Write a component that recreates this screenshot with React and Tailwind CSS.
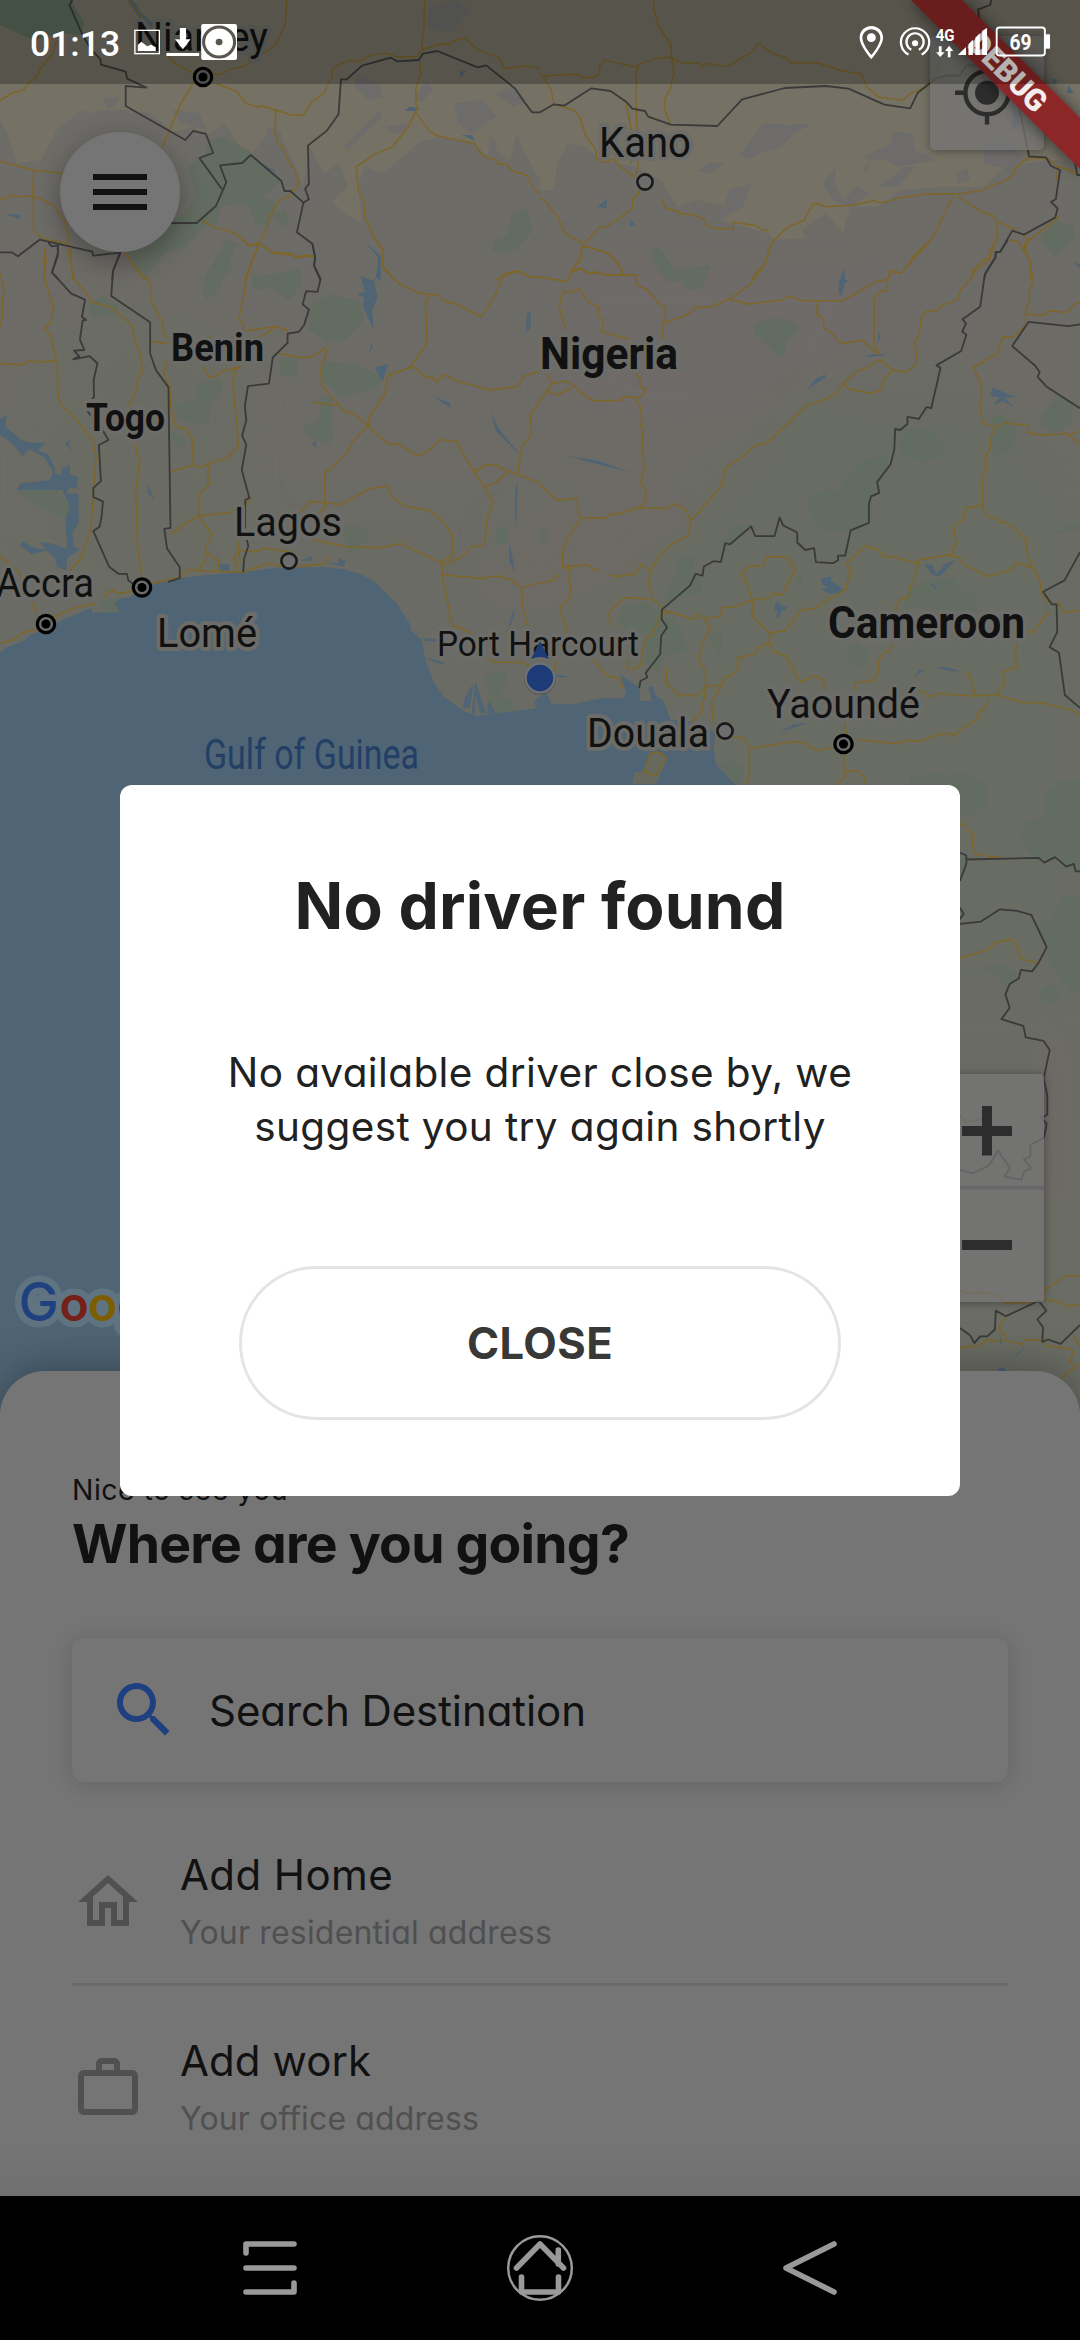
import React from "react";

const BORDERS_TOP_LEFT = [
  "M210 0 202 16 240 105 262 145 292 178 293 194 365 215 369 236 425 263 365 258 365 318 538 420 561 393 598 402 619 459 579 474 644 567",
  "M0 757H34L52 769 115 719 268 755 270 767 349 758 400 700 500 669H571L627 618 657 547 639 496 703 489 728 465 817 543 826 573H843L881 608 897 598 886 566 897 552 894 437 949 392 983 343 990 238H1007L1051 197 1135 173 1153 184 1216 180 1228 161 1270 153 1387 202 1412 196 1496 266 1526 311 1545 337H1568",
  "M881 608 862 697 907 731 915 771 912 797 930 840",
  "M140 727 150 739 168 737V767L151 817 172 840",
  "M349 758 328 813 326 840",
];
const BORDERS_TOP_RIGHT = [
  "M0 337 40 313 70 317 149 265 205 273 250 305 268 326 305 333 314 350 380 374 515 378 587 298 711 264 830 258 896 266 1000 314 1075 325 1097 278 1152 234 1187 226 1217 228 1237 198 1290 190 1283 120 1272 28 1307 15 1311 0",
  "M1375 255 1393 330 1420 469 1469 472 1484 498 1510 510 1498 597 1484 606 1503 625 1496 653 1405 704 1371 692 1337 755 1323 758V772L1294 820 1289 840",
  "M1455 300 1484 382 1540 415 1560 525H1568",
];
const BORDERS_MID_LEFT = [
  "M168 15V37L151 91 207 150 247 167 238 215 250 224 240 225 232 279 245 308 215 310 230 326 213 334 260 325 283 345 272 392 273 440 245 470 290 520 315 560 287 574 293 675 271 694V720L299 732 295 775 289 803 271 815 317 915 345 935H369L372 952 395 970",
  "M349 37 328 87 323 157 436 230V318L453 365 489 412 495 806 477 809 485 864 522 916V947L488 957",
  "M907 10 915 50 912 72 931 109 922 145 889 143 879 180 897 195 883 238 868 257 835 262V288L792 329 781 402 720 409 711 466 715 505 703 548 715 573 702 644 724 722 712 728V820L721 857 709 892 706 930",
];
const BORDERS_MID_RIGHT = [
  "M1358 0 1336 33H1323V47L1292 95 1278 187 1227 222 1237 234 1226 256 1238 265 1223 311 1151 351 1163 358 1136 471 1122 468 1100 501 1067 495V515L1046 532 1031 529 1029 585 1018 628 979 678 985 708 961 718 955 740V792L902 813 886 884H865L866 896 851 905 801 902 796 863 770 868 747 847V819L706 799 696 777 681 829H625L613 802 552 852 538 849 525 902 505 899 476 914 472 940 452 935 436 967 354 1035 353 1062 369 1085 352 1108 349 1160 307 1212 312 1225 292 1234 288 1255",
  "M1568 236 1534 241 1419 229 1371 297 1438 352 1451 370 1445 383 1470 410 1568 471",
  "M1568 874 1523 953 1461 985 1486 1020H1500L1502 1097 1480 1140 1507 1156 1524 1274 1568 1310",
];
const BORDERS_EAST = [
  "M60 184 79 191V212L60 255M79 201 296 197 313 209 345 195 379 219 401 212 407 231H420",
  "M60 323 71 338 60 352M60 364 123 358 180 327 231 331 274 341 320 423 296 462 276 484 243 480 236 502 209 516 196 542 209 576 184 605 250 622 257 651 311 660 329 683 311 755 322 798V846L304 855 320 869 312 905",
  "M60 1386 91 1405 103 1424 120 1407H142L165 1389 167 1342 198 1356 296 1317 319 1342 292 1364 309 1384 307 1421 324 1415 362 1426 420 1378",
];

const ROADS_TOP_LEFT = [
  "M0 302 33 280 67 271 90 242 102 238 121 200 150 165 165 120",
  "M370 0 440 88 495 180 545 212 570 225 640 223 670 208 714 197 800 135 829 70 832 0",
  "M560 250 524 313 471 443M630 252 687 274 714 310 745 321 763 318 848 346H879L905 306 944 276 946 262 963 236 967 206 980 196 1012 182 1043 184 1080 164 1125 160 1150 170H1211L1228 148 1280 132H1305L1320 122 1350 113 1388 150 1448 173 1466 206 1530 198 1568 206",
  "M1233 0 1231 90 1225 125 1228 148M1219 185 1222 222 1208 262V315L1213 323 1206 337 1186 380 1141 439 1088 463 1035 500 1040 570 1059 611 1057 643 1089 718 1113 748 1110 796 1146 840",
  "M1206 337 1248 394 1270 408 1375 430 1407 471 1440 480 1446 492H1469L1489 513 1529 525 1545 560 1568 583",
  "M801 328 798 405 806 415 805 428 827 449 831 471 858 515 860 536 869 546 861 567 843 574 837 590 807 605 779 658 776 684 752 729 711 840",
  "M584 660 620 680 653 692 661 689 697 711 722 737 751 729 794 760 848 765 859 773 887 768 913 771",
  "M0 484 98 511 182 520M98 511 94 590M0 596 20 595 32 584 50 590 80 588 120 597 155 617 185 660 199 710 206 757M97 592V692L125 717 195 730M130 742 134 790 127 825 133 840M198 755 208 795 211 840M362 757 418 836 430 832M1440 840 1463 822 1503 812 1540 832 1568 830",
];
const ROADS_TOP_RIGHT = [
  "M330 0 331 30 343 75 380 135 382 172 390 213 378 267 362 298 361 323 379 372",
  "M10 228 108 223 125 234 163 230 171 222 172 200 187 180 273 200 335 175 382 172 411 188 463 190 472 202 487 190 528 199 552 195 614 157 634 130 680 163 709 170 729 188H806L882 214 930 221 951 262 985 292 1055 300 1075 281 1115 262 1150 222 1163 180",
  "M0 218 32 267 40 313 98 330 115 350 134 409 162 448 164 475 180 487 215 478 235 502 275 532 285 498 278 270 281 242 277 220 288 197M247 300 264 380V490M289 570 284 585 268 595 269 625 193 681H174L128 731 72 700 50 648 34 630 15 603 0 593",
  "M352 595 368 626 402 634 403 641 448 644 480 660 481 675 510 686H561L562 666 628 677 644 690 665 691",
  "M615 840 630 813 653 793 671 730 717 683 766 661 792 613 802 610 830 620 905 616 970 602 982 606 1005 607 1036 595 1130 581 1219 582 1282 571 1358 538 1377 523 1379 505 1417 473 1475 476 1503 500 1530 507 1560 525",
  "M1199 588 1140 714 1082 770 1069 797 1047 820 1017 813 1010 840M1213 590 1287 638 1313 646 1327 664 1386 690M1327 664V717L1306 752 1303 774 1283 783 1257 810 1252 840",
  "M1508 650 1422 720 1397 702M1361 720 1389 726 1425 785V840M1422 720 1406 748M1535 507 1568 528M1503 500 1500 540",
  "M88 813 115 785 122 742 136 740 199 760 227 794 242 823M88 813 120 805 140 821 164 815 190 825H278V840",
];
const ROADS_MID_LEFT = [
  "M130 25 127 105 155 185 147 232 127 247 145 263 166 340 169 442 180 466 205 484 270 562 279 605 263 820 258 828 237 890 206 921 203 955",
  "M205 20 208 75 214 108 261 162 264 174 326 189 384 240 389 277 405 310 414 365 398 393V415L377 460 395 571V600L406 616 394 705 399 852 411 940M362 37 418 107 428 105 439 130V168L473 234 475 260 487 276",
  "M0 95 12 135 6 180 8 210 0 243M0 345 60 350 92 336 106 342 165 338M0 885 55 930 90 1010 105 1045",
  "M751 10 711 120 708 160 693 220 708 237 705 255 803 242 833 252 835 262M803 242 760 270 690 275 600 272M437 290 450 284 490 291M484 340 475 375 497 420 495 465 509 520 542 530 558 555 561 630M497 648 561 630 585 636 613 624 660 610 693 577 676 400 683 365 697 355 650 366 620 383H607L590 352M611 625 602 655 611 680 578 714V775L617 826 598 855 596 900 572 925M577 775 592 771 665 764 700 752 730 722M497 818 504 821 534 797 578 770",
  "M708 0 722 16 751 10 794 35 848 38 859 48 887 42 913 46M1090 0 1113 28 1110 76 1146 110 1163 125 1222 150 1275 154 1285 170 1320 177 1397 215 1440 150 1453 115 1463 102 1503 87 1540 103 1568 106M1248 152 1236 177 1240 290 1190 357 1127 380 1117 432 1071 498 1070 519 1025 562 1010 592 952 647H943V735",
  "M808 317 870 329H902L945 302 950 308 930 365 935 408 1000 480 1030 488 1125 570 1158 571 1203 600 1220 603 1245 590 1278 558 1310 565 1325 560 1340 592 1375 646 1405 692 1431 733 1414 785 1408 848 1400 857 1370 858 1345 885 1283 912M912 454 978 463",
  "M1190 357 1207 358 1215 370 1240 385 1258 385 1268 398 1290 376 1321 393 1422 420 1501 411 1520 382 1558 369 1568 372M1371 645H1388L1405 632 1435 628 1472 646 1503 657 1568 680M1568 447 1541 490 1543 545 1515 580 1503 657M1472 650 1440 680 1405 692",
  "M943 735 902 732 850 785 825 820M943 735 990 741 1074 696 1125 689 1138 719 1175 745 1203 750 1245 757 1280 780 1313 824V887L1283 900 1286 950 1313 1081 1335 1085 1375 1105M943 735 942 750 920 770 905 810",
  "M875 832 950 848 1000 858 1105 862 1163 850 1283 905M1290 938 1400 948 1440 940 1485 951 1515 974 1560 960M1515 974 1517 1030 1532 1080 1560 1120M1415 1170 1435 1182H1515L1540 1195",
  "M0 1130 43 1118 60 1102 105 1090 170 1048 220 1030 275 1018M300 1000 325 980 345 990 375 985 440 962 520 945 545 923 600 927 706 930 780 905 835 917 940 907 955 887M690 930 680 885 700 868 740 873 770 863 850 875M598 875 635 898 632 928M690 840 697 900 684 905",
];
const ROADS_MID_RIGHT = [
  "M0 104 78 116 90 92 120 80 140 95 160 92 190 97H278V124L312 140 345 178 363 188 364 220 357 235 435 205 452 189 500 187 548 165 605 180 705 168 719 157 765 170H880L975 117 1010 110 1020 87 1047 93 1069 72 1135 0",
  "M88 88 115 57 122 17 136 18 199 38 227 68 242 95M555 163 610 125 653 67 668 18 680 0M357 230V275M75 250 55 187 68 144 88 146 115 137 139 174 170 186 168 213 185 221 180 258 260 277",
  "M0 450 20 422 35 402 70 395 95 405 125 433 160 451 237 449 242 439 285 442 303 430 305 414 290 410V387L278 375M20 422 50 434 90 415M273 442 290 462 297 500 290 520 300 525 296 595 303 605 299 612 303 640 292 680 306 700 309 718 301 740 282 751",
  "M0 685 50 729 108 723 110 765 120 778 190 779 205 767 225 768 282 751H368L392 738 424 756 437 787 529 687 537 639 580 613 625 575 659 568 775 463 832 445 858 430 879 402 925 365 940 362 987 335 1025 365 1065 370 1090 352 1094 320 1087 290 1102 262 1107 218 1120 200 1158 195 1165 184 1212 167 1222 138 1255 105 1260 90 1305 55 1323 0M33 398 20 375",
  "M804 175V210L824 220V248L852 262 860 279 880 290 935 280 960 302 987 322M1010 110 1007 142 987 145 970 163V290L987 322M879 402 900 418 962 430 990 420 1002 385 1025 365",
  "M437 787 432 828 385 850 345 885 320 930 314 965 326 998M118 780 78 838 66 868V918L90 920M73 912 100 913 140 909 155 922 175 927M200 936 222 943 260 935 273 938 295 907 320 930M90 915 82 950 90 965 86 1000 56 1030 78 1090 65 1120M0 962 35 953 55 937",
  "M326 1005 245 1002 210 1032 196 1053 210 1083M328 1005 370 1045 355 1048M365 1038 447 1062 455 1048 475 1060 522 1055 530 1029 570 1026 610 1010 665 1002 675 990 705 993 710 978 742 923 720 888 658 886 648 912 605 914 586 938 606 970 616 1010V1053L667 1100M355 1040 325 1108 312 1107 298 1150 292 1190 270 1203 252 1197 260 1180 M47 1175 40 1210M150 1170 195 1220 235 1230 240 1255",
  "M475 1060 495 1085 468 1135 470 1155 459 1162 467 1190 480 1202V1265L468 1325 440 1350M367 1198V1243L407 1278 430 1272 450 1278 480 1262M472 1260 488 1248H528M528 1245 537 1225 560 1218 575 1200 576 1168 620 1162 635 1140 665 1128 670 1100 710 1095 757 1037 795 1032 890 977 893 955 903 935 890 905 947 855 960 863H978L995 885 1035 888 1100 907",
  "M667 1125 675 1152 715 1165 755 1237 800 1220 820 1232 830 1260M528 1248 498 1290 503 1352",
  "M1411 0 1406 20 1425 65V90L1435 108 1420 145 1421 175 1411 190 1410 238 1375 272 1345 271 1327 318 1258 357 1278 395 1283 430 1277 460 1284 512 1322 524 1357 510 1372 516H1415L1417 540 1455 546 1530 542 1568 572M1413 208 1467 210 1475 198 1530 203 1555 178 1568 174M1540 545 1568 535",
  "M1322 528 1310 550 1308 583 1296 600 1298 612 1290 622 1300 637 1283 658 1287 750 1300 775 1325 780 1333 792 1345 788 1373 803 1412 840 1415 880 1433 920 1452 955 1454 985 1470 1010 1490 1018 1507 1017 1518 1044 1568 1037M1285 743 1235 751 1230 780 1205 800 1202 817 1210 850 1195 865 1198 880 1100 895 1100 907 1085 950V970M1078 965 1070 1000 1045 1008 1030 1030 1040 1040M1187 884 1215 888 1230 907 1298 942 1365 925 1387 903 1433 920M1480 1040 1460 1060 1436 1097H1412",
  "M1024 1130 1015 1150 998 1155 982 1182 985 1205 968 1235 917 1240 910 1262M1385 1130 1380 1165 1385 1195 1342 1210 1350 1240 1325 1273M1100 1262 1120 1270 1140 1280 1155 1270 1260 1277 1325 1273 1400 1295 1455 1296 1540 1315 1568 1330M1235 1208 1250 1225 1265 1275M1300 1278 1298 1305 1275 1322 1272 1340 1215 1375 1205 1390 1195 1382 1155 1385 1100 1405 1073 1400 1035 1410 925 1400M885 1350 890 1385M855 1420 805 1430 765 1408 735 1405 625 1422 610 1425 590 1395 560 1390M608 1425V1500L598 1523M883 1440V1485L888 1500 865 1523M885 1487H925L945 1510 940 1523",
  "M318 1440 305 1480 300 1488 335 1500 368 1450 355 1440 340 1433Z",
];
const ROADS_EAST = [
  "M60 112H75L78 122 101 136 97 150 100 180 112 190 130 187 148 195H185",
  "M60 451 147 428 164 413 213 402 234 426 243 453 293 462",
  "M190 1322H260L300 1312 320 1285 340 1275 375 1255 420 1254M300 1307 325 1318 345 1316 378 1330 420 1328M60 1438 90 1430 105 1435 145 1416 170 1420 180 1414 248 1428 252 1417 300 1415 320 1430 385 1438 400 1445 390 1470 400 1482M198 1358 175 1385 200 1410M400 1405 420 1435M420 1475 360 1515",
];

const BORDERS_BEHIND_ZOOM = [
  "M312 905 271 923V952L251 960 275 982 253 989 244 1011 193 1003 210 982 174 937 147 975 96 995 60 986",
];
const ROADS_BEHIND_ZOOM = ["M60 848 80 866 125 858M60 1293 80 1298 130 1296 175 1302 190 1320"];

function Lines({ paths, color, width = 1.5 }) {
  return paths.map((d) => (
    <path key={d} d={d} fill="none" stroke={color} strokeWidth={width} strokeLinejoin="round" vectorEffect="non-scaling-stroke" />
  ));
}

function Label({ x, y, w, size, children, weight = 400, fill = "#111", halo = "#6c6c69" }) {
  return (
    <text x={x} y={y} textLength={w} lengthAdjust="spacingAndGlyphs" fontSize={size} fontWeight={weight} fill={fill}
      stroke={halo} strokeWidth={halo === "none" ? 0 : 8} strokeLinejoin="round" paintOrder="stroke">
      {children}
    </text>
  );
}

function Capital({ x, y }) {
  return (
    <g>
      <circle cx={x} cy={y} r="8.7" fill="#6b6b6b" stroke="#000" strokeWidth="3.2" />
      <circle cx={x} cy={y} r="4.6" fill="#000" />
    </g>
  );
}

function Town({ x, y }) {
  return <circle cx={x} cy={y} r="7.6" fill="#6d6d6d" stroke="#191919" strokeWidth="2.6" />;
}

function MapCanvas() {
  const water = "#4f6474";
  const desert = "#757165";
  const green = "#626c60";
  const road = "#7e6628";
  const border = "#3a3a3a";
  return (
    <svg className="absolute left-0 top-0 font-['Roboto',sans-serif]" width="1080" height="1440" viewBox="0 0 1080 1440">
      <defs>
        <linearGradient id="land" x1="0" y1="0" x2="0" y2="1">
          <stop offset="0" stopColor="#6e6c68" />
          <stop offset="0.28" stopColor="#6d6b66" />
          <stop offset="0.42" stopColor="#6a6b64" />
          <stop offset="1" stopColor="#6a6d64" />
        </linearGradient>
        <filter id="soft" x="-30%" y="-30%" width="160%" height="160%"><feGaussianBlur stdDeviation="18" /></filter>
        <filter id="shade" x="-30%" y="-30%" width="160%" height="160%"><feGaussianBlur stdDeviation="8" /></filter>
      </defs>
      <rect width="1080" height="1440" fill="url(#land)" />
      <g filter="url(#soft)">
        <path d="M100 300 250 340 240 480 300 640 120 640 0 560V420Z" fill="#6a6c64" />
        <path d="M560 260 900 260 820 420 640 440 560 400Z" fill="#6e6b68" />
        <path d="M620 560 800 380 960 380 1080 460V1000H700Z" fill="#696c64" />
        <path d="M500 530 680 480 700 520 560 600 480 610Z" fill="#6d6a65" />
      </g>

      <g transform="scale(.34439 .33333)">
        <path fill={desert} d="M0 0H1568V540L1530 470 1500 400 1480 480 1430 440 1410 470 1380 430 1290 410 1220 425 1160 480 1110 520 1060 500 1040 560 1050 670 1000 640 965 605 1010 560 985 490 940 520 900 440 880 560 850 480 800 380 760 420 730 465 690 430 650 370 600 410 560 380 500 400 440 340 360 330 290 330 240 350 160 400 120 480 50 490 20 400 0 360Z" />
        <g fill="#6d6c6b">
          <path d="M1250 15 1320 0 1370 30 1310 100 1240 80ZM1040 220 1100 250 1110 290 1070 300 1030 260ZM1200 300 1240 240 1255 270 1225 305ZM1100 330 1110 350 1010 450 1000 440ZM1320 310 1400 300 1440 350 1370 400 1330 370ZM1440 280 1490 260 1530 300 1490 322ZM1420 410 1445 430 1425 465ZM300 295 345 290 340 315 310 325ZM1120 380 1180 370 1175 400 1130 400ZM160 390 240 330 290 350 220 400ZM500 330 580 340 600 390 530 370ZM780 380 820 400 805 430 770 430" />
        </g>
        <path fill="#5c6b5d" d="M0 0H205L245 70 235 105 170 100 100 122 0 75Z" />
        <path fill={green} d="M600 420 650 410 720 450 817 543 760 590 805 610 780 680 740 670 720 610 640 620 630 670 590 680 540 740 480 760 420 830 370 760 450 690 540 640 570 580 545 500 600 460ZM790 640 830 630 840 670 820 685ZM655 720 690 730 640 840 590 840ZM1490 640 1530 625 1545 690 1500 750 1430 758 1432 725 1470 710Z" />
        <path fill={water} d="M368 0H385L410 40 445 70 440 90 405 55ZM1175 333 1190 320 1220 325 1210 333ZM1340 405H1370L1380 422ZM1335 215 1355 212 1338 232ZM15 643 57 643V657ZM750 485 795 510 800 520ZM1060 725 1105 768V840H1098V772Z" />
        <Lines paths={ROADS_TOP_LEFT} color={road} />
        <Lines paths={BORDERS_TOP_LEFT} color={border} width={1.8} />
      </g>

      <g transform="translate(540 0) scale(.34439 .33333)">
        <path fill={desert} d="M0 0H1568V490L1480 480 1350 500 1290 560 1180 560 1050 570 980 620 900 620 880 700 830 640 760 690 770 715 680 720 660 700 520 660 540 620 460 600 400 620 350 540 280 500 180 480 130 440 80 430 50 490 40 570 0 570Z" />
        <g fill="#6d6c6b">
          <path d="M580 465 610 420 650 370 720 375 790 370 740 400 700 440 640 460 600 480ZM455 515 490 490 535 490 500 520ZM940 470 1020 430 1025 395 1080 400 1090 450 1150 480 1040 500 1000 478 950 480ZM550 570 615 550 590 620 520 660ZM820 550 860 500 855 550 880 600 920 560 960 580 900 620 850 600ZM1010 540 1060 500 1090 500 1040 560 980 560ZM1290 420 1360 430 1410 470 1370 510 1290 490ZM1210 520 1240 505 1250 540 1215 550ZM940 500 960 490 945 520" />
        </g>
        <path fill={green} d="M315 755 345 740 390 810 498 797 480 840H375ZM1450 710 1500 660 1550 680 1555 710 1495 770Z" />
        <path fill={water} d="M167 620 195 597 193 625ZM262 660 278 677 261 678ZM872 840 882 808 886 840ZM1485 235 1502 240 1495 255ZM1533 255 1550 280 1530 280ZM1375 310 1393 370 1368 395 1372 350ZM1548 787 1568 795V805Z" />
        <Lines paths={ROADS_TOP_RIGHT} color={road} />
        <Lines paths={BORDERS_TOP_RIGHT} color={border} width={1.8} />
      </g>

      <g transform="translate(0 240) scale(.34439 .35714)">
        <path fill={green} d="M665 0 685 15 660 60 675 85 650 100 630 150 600 167 585 145 610 75 650 50ZM732 100 830 90 870 75 878 120 840 170 790 135 732 140ZM900 180 965 152 1050 175 1055 230 1000 280 950 285 895 250ZM930 340 1020 345 1110 380 1100 410 990 440 940 400ZM260 180 300 158 345 185 325 210 290 218 262 210ZM560 430 590 395 640 390 645 420 600 465ZM505 465 550 450 608 460 605 510 570 518 510 495ZM880 520 925 510 935 440 965 440 960 510 972 550 950 575 890 545ZM815 330H865V385L812 375ZM48 702 140 675 203 740 195 780 110 745ZM985 800 1070 805 1065 840 1015 882 1010 850ZM1440 810 1475 800 1475 850 1440 855ZM1405 1220 1465 1205 1470 1240 1450 1280 1495 1290 1495 1320 1400 1330 1420 1270ZM500 540 545 560 530 580 498 570ZM290 1010 340 1005 335 1020 350 1043 300 1040Z" />
        <path fill={water} d="M0 500 20 490 15 520 60 560 90 568H133L110 590 140 600 160 640V655L180 658V640L203 630V655L225 662V695H200L192 710H228V795L210 820 215 860 232 865 195 890 193 925 165 915 160 890 135 870 90 880 58 855 65 843 95 860 135 868 115 845 150 850 195 865 190 780 203 745 180 700H160L50 700 60 682 145 672 155 650 130 610 85 585 65 605 35 570 0 545ZM190 570 205 555 200 575 215 597ZM427 683 450 727 430 710ZM1060 5 1105 48V95L1085 115 1097 160 1080 195 1085 250 1065 210 1055 190 1057 160 1035 152 1060 145 1048 103 1090 115 1100 50ZM1070 320 1080 285 1082 300ZM1088 358 1128 347 1110 395ZM1255 437 1305 455 1308 470ZM1425 482 1450 530 1513 605 1440 535ZM1530 205 1541 200V245L1527 260ZM905 572 918 562V582ZM1497 690 1503 680 1500 800 1495 760ZM1480 850 1497 930 1478 900ZM635 908H665V925L640 928ZM870 900 908 884 905 897ZM950 903 985 905 983 890 1005 900 998 915ZM1470 1105 1495 1022 1490 1060Z" />
        <path fill={water} d="M0 1155 20 1140 70 1122 85 1108 130 1090 180 1065 265 1030 270 1043H350L333 1020 345 1005 375 1000 440 965 520 948 600 938 706 930 800 918 940 916 1000 922 1045 935 1085 955 1150 1015 1193 1080 1192 1092 1225 1120 1235 1175 1260 1240 1290 1280 1350 1320 1385 1333 1440 1325 1556 1312 1552 1290 1585 1268 1603 1300H1668L1743 1283H1808L1818 1265 1800 1215 1858 1255V1290H1893L1883 1250H1896L1903 1275 1926 1290 1948 1345 2038 1350 2068 1375 2076 1385 2073 1430 2080 1470 2143 1530V3500H0Z" />
        <path fill={water} d="M1225 1115 1268 1118V1124L1235 1123ZM1235 1168 1280 1180 1298 1190 1260 1182ZM1343 1310 1350 1280 1375 1240 1365 1310ZM1380 1235 1412 1325H1395L1378 1270 1380 1330 1370 1325ZM1420 1290 1440 1325 1415 1325Z" />
        <path fill="#67695f" d="M1835 1523 1843 1490 1870 1488 1885 1435 1920 1433 1938 1450 1905 1523Z" />
        <Lines paths={ROADS_MID_LEFT} color={road} />
        <Lines paths={BORDERS_MID_LEFT} color={border} width={1.8} />
      </g>

      <g transform="translate(540 240) scale(.34439 .35714)">
        <path fill={green} d="M315 30 345 20 390 95 420 80 498 70 470 135 420 142 415 115 375 118 345 85ZM620 235 680 218 720 225 757 245 715 290 705 328 675 310 625 265ZM780 720 830 695 860 705 930 620 1015 598 1010 630 979 678 985 708 955 740 950 792 900 813 840 817 795 790 777 740ZM1042 560 1080 530 1130 525 1178 580 1160 610 1120 624 1045 600ZM525 845 560 800 605 795 613 802 552 852 525 875ZM368 1000 410 885H445L450 930 470 940 468 990 400 1000 360 1035ZM228 1070 240 1030 300 1015 352 1035 353 1062 395 1060 430 1155 370 1160 345 1210 305 1185 310 1105 250 1095ZM490 1110 530 1090 525 1165ZM1055 1030 1065 990 1120 955 1210 945 1220 980 1260 990 1270 1040 1200 1050 1130 1030ZM890 1150 920 1130 955 1150 950 1185 920 1195 890 1180ZM1455 0H1525L1495 48ZM1455 495 1500 435 1540 450 1545 510 1500 540 1455 520ZM1310 495 1340 485 1360 510 1380 530 1370 590 1310 610 1320 540ZM1500 815 1568 790V810L1505 824ZM740 945 760 930V965ZM515 1470 560 1455 590 1480 585 1520H560ZM1075 1500 1150 1495 1190 1500 1240 1490 1300 1568H1070ZM0 810 20 820V842H0Z" />
        <path fill={water} d="M867 120 883 85 885 112 896 114 885 120 876 157 868 150ZM932 325 975 320 985 318 1005 323 960 327ZM980 290 983 258 990 272ZM776 418 800 390 829 376V384ZM80 605 170 618 262 651 185 632ZM1315 414 1383 440 1350 442 1377 470 1345 450 1318 462 1335 440 1307 437ZM815 948 845 942V955L880 978 865 990 843 990 815 980 835 972 820 965ZM685 1012 718 1030 700 1043 695 1058 683 1058 690 1040 680 1035ZM1115 908 1140 910 1150 935 1180 905 1205 898 1163 940 1140 938 1130 925ZM1130 960 1145 965 1155 985ZM1085 1225 1100 1205 1120 1202ZM1150 1198 1185 1196 1222 1208 1190 1207ZM693 1378 735 1357 785 1350ZM40 1222 50 1218 85 1223 60 1226ZM1550 62 1568 70V76ZM0 635 45 615 20 627Z" />
        <Lines paths={ROADS_MID_RIGHT} color={road} />
        <Lines paths={BORDERS_MID_RIGHT} color={border} width={1.8} />
      </g>

      <g transform="translate(940 780) scale(.33333 .39541)">
        <path fill="#6d6a65" filter="url(#shade)" d="M280 660 370 640 400 900 390 1060 320 1080Z" />
        <path fill={green} d="M60 0H130L145 55 95 90 60 85ZM320 30 370 0H420V230L380 215 345 195 313 205 260 180 245 150 255 105 310 95ZM365 295H420V530L400 545 330 460 320 423 290 370 340 345ZM125 475 190 470 230 490 215 510 195 525 180 500ZM295 535 330 515 357 530 350 560 315 565ZM60 200 79 195 60 250Z" />
        <path fill={water} d="M215 1465 260 1428 240 1450ZM180 1405 187 1425H180ZM170 1495 180 1487H195V1495Z" />
        <Lines paths={ROADS_EAST} color={road} />
        <Lines paths={BORDERS_EAST} color={border} width={1.8} />
      </g>

      <Label x="135" y="50.5" w="133" size="41">Niamey</Label>
      <Label x="599" y="157" w="92" size="42">Kano</Label>
      <Label x="171" y="361" w="93" size="39" weight="700">Benin</Label>
      <Label x="540" y="368.500" w="138" size="44" weight="700">Nigeria</Label>
      <Label x="86" y="431" w="79" size="39" weight="700">Togo</Label>
      <Label x="234" y="536" w="108" size="40">Lagos</Label>
      <Label x="-4" y="597" w="98" size="40">Accra</Label>
      <Label x="157" y="647" w="100" size="40">Lomé</Label>
      <Label x="437" y="656" w="202" size="35">Port Harcourt</Label>
      <Label x="828" y="638" w="197" size="45" weight="700">Cameroon</Label>
      <Label x="767" y="717.500" w="153" size="41">Yaoundé</Label>
      <Label x="587" y="747" w="122" size="41">Douala</Label>
      <Label x="204" y="769" w="215" size="43" fill="#233f66" halo="none">Gulf of Guinea</Label>

      <Capital x="203" y="77" />
      <Capital x="142" y="587.5" />
      <Capital x="46" y="624" />
      <Capital x="843.5" y="744" />
      <Town x="645" y="182" />
      <Town x="289" y="561" />
      <Town x="725" y="731" />

      <path d="M531 659 540 641 549 659Q540 655 531 659Z" fill="#1d3c77" />
      <circle cx="540" cy="679" r="16" fill="#444" opacity=".4" />
      <circle cx="540" cy="678" r="14.3" fill="#1d3c77" stroke="#6f7176" strokeWidth="2.2" />

      <g fontFamily="Inter" fontWeight="500" strokeLinejoin="round">
        <g stroke="#5f7480" strokeWidth="13" fill="#5f7480">
          <text x="18.500" y="1320.500" fontSize="54">G</text>
          <g fontSize="48" fontWeight="600"><text x="59.500" y="1320.500">o</text><text x="88" y="1320.500">o</text><text x="117" y="1320.500">g</text></g>
        </g>
        <text x="18.500" y="1320.500" fontSize="54" fill="#1f4180">G</text>
        <g fontSize="48" fontWeight="600">
          <text x="59.500" y="1320.500" fill="#752018">o</text>
          <text x="88" y="1320.500" fill="#7d5d02">o</text>
          <text x="117" y="1320.500" fill="#1f4180">g</text>
        </g>
      </g>
    </svg>
  );
}

function MapControls() {
  return (
    <>
      <button className="absolute left-[60px] top-[132px] flex h-[120px] w-[120px] items-center justify-center rounded-full bg-[#757575] shadow-[0_9px_26px_2px_rgba(0,0,0,0.28)]" aria-label="Menu">
        <svg width="72" height="72" viewBox="0 0 24 24" fill="#111"><path d="M3 18h18v-2H3v2zm0-5h18v-2H3v2zm0-7v2h18V6H3z" /></svg>
      </button>
      <button className="absolute left-[930px] top-[36px] h-[114px] w-[114px] rounded-[5px] bg-[#757575]/75 shadow-[0_1px_8px_rgba(0,0,0,0.35)]" aria-label="My location">
        <svg width="114" height="114" viewBox="0 0 114 114" fill="none" stroke="#2d2d2d" strokeWidth="4.4">
          <circle cx="57" cy="56.7" r="21.6" /><circle cx="57" cy="56.7" r="12" fill="#2d2d2d" stroke="none" />
          <path d="M57 26v9M57 79v9.500M25 56.700h9M80 56.700h9" />
        </svg>
      </button>
      <div className="absolute left-[930px] top-[1074px] h-[228px] w-[114px] rounded-[4px] bg-[#757575]/80 shadow-[0_1px_8px_rgba(0,0,0,0.35)]">
        <svg width="114" height="228" viewBox="0 0 114 228" fill="#2d2d2d">
          <g transform="translate(10 -294) scale(.33333 .39541)">
            <Lines paths={BORDERS_BEHIND_ZOOM} color="#646464" width={1.8} />
            <Lines paths={ROADS_BEHIND_ZOOM} color="#746d5c" />
          </g>
          <path d="M0 112h114v3.500H0z" fill="#666" />
          <path d="M32 52h20V32h10v20h20v10H62v19.600H52V62H32zM32 166h50v10H32z" />
        </svg>
      </div>
    </>
  );
}

function DebugBanner() {
  return (
    <svg className="absolute right-0 top-0 font-['Roboto',sans-serif]" width="220" height="220" viewBox="0 0 220 220">
      <defs><filter id="bannerShadow" x="-30%" y="-30%" width="160%" height="160%"><feGaussianBlur stdDeviation="8" /></filter></defs>
      <path d="M50 0H102L220 118V172Z" fill="#000" opacity=".5" filter="url(#bannerShadow)" />
      <path d="M51 0H102L220 118V169Z" fill="#8d2727" />
      <text transform="translate(148 72.500) rotate(45)" y="10.500" textAnchor="middle" fontSize="30.600" fontWeight="900" fill="#f2eeee" textLength="97">DEBUG</text>
    </svg>
  );
}

function StatusBar() {
  return (
    <header className="relative flex h-[84px] items-stretch justify-between bg-black/25 font-['Roboto',sans-serif] text-white">
      <div className="flex">
        <span className="ml-[30px] w-[94px] pt-[22px] text-[35.500px] font-medium leading-[44px]">01:13</span>
        <svg className="ml-[9px]" width="110" height="84" viewBox="386 0 319.400 252" preserveAspectRatio="none" fill="#fff">
          <rect x="391.500" y="91" width="71" height="70" fill="none" stroke="#fff" strokeWidth="4" />
          <path d="M400 153V135l10-10 17 14 12-5 13 8v11z" />
          <path d="M483 159h95v9h-95zM522 84h18v34h13l-22 30-23-30h14z" />
          <rect x="584" y="72" width="104" height="108" rx="6" />
          <circle cx="636" cy="126" r="45" fill="none" stroke="#5b564f" strokeWidth="9" />
          <circle cx="636" cy="126" r="10" fill="#5b564f" />
        </svg>
      </div>
      <svg width="230" height="84" viewBox="900 0 668 252" preserveAspectRatio="none" fill="#fff">
        <path d="M962 78c-19 0-34 15-34 35 0 24 34 64 34 64s34-40 34-64c0-20-15-35-34-35zm0 10c14 0 26 11 26 26 0 15-14 37-26 51-12-14-26-36-26-51 0-15 12-26 26-26z" />
        <circle cx="962" cy="113" r="13" />
        <g fill="none" stroke="#fff" strokeWidth="6.500">
          <path d="M1070 164a41 42 0 1 1 38 0" /><path d="M1078 149a25 26 0 1 1 22 0" /><circle cx="1089" cy="130" r="9" fill="#fff" stroke="none" />
        </g>
        <text x="1149" y="122" fontSize="52" fontWeight="700" textLength="55" lengthAdjust="spacingAndGlyphs">4G</text>
        <path d="M1158 139h8v18h9l-13 14-12-14h8zM1184 172v-19h-8l12-16 12 16h-8v19z" />
        <path d="M1213 165l24-24v24zM1244 133l13-14v46h-13zM1264 113l13-13v65h-13zM1284 93l14-10v82h-14z" />
        <rect x="1326" y="82.500" width="140" height="84" rx="8" fill="none" stroke="#fff" strokeWidth="5.500" />
        <path d="M1466 103h15v43h-15z" />
        <text x="1363" y="149" fontSize="67" fontWeight="700" textLength="64" lengthAdjust="spacingAndGlyphs">69</text>
      </svg>
    </header>
  );
}

function PlaceRow({ icon, title, titleClass, subtitle, subtitleClass }) {
  return (
    <div className="flex h-[103px] items-center gap-[36px]">
      <svg width="72" height="72" viewBox="0 0 24 24" fill="#505050"><path d={icon} /></svg>
      <div className="whitespace-nowrap">
        <p className={"text-[42px] leading-[50px] text-[#111] " + titleClass}>{title}</p>
        <p className={"mt-[13px] text-[32px] leading-[40px] text-[#505050] " + subtitleClass}>{subtitle}</p>
      </div>
    </div>
  );
}

function BottomSheet() {
  return (
    <section className="relative h-[825px] whitespace-nowrap rounded-t-[45px] bg-[linear-gradient(#757575,#757575_93%,#707070)] px-[72px] pt-[101px] text-[#111] shadow-[0_0_45px_rgba(0,0,0,0.35)]">
      <p className="text-[28.500px] leading-[36px] tracking-[0.46px]">Nice to see you</p>
      <h1 className="mt-[4px] text-[53.500px] font-bold leading-[64px] tracking-[-0.78px]">Where are you going?</h1>
      <div className="mt-[62px] flex h-[144px] items-center gap-[29px] rounded-[12px] bg-[#757575] pl-[36px] text-[42px] tracking-[-0.07px] shadow-[0_3px_22px_rgba(0,0,0,0.15)]">
        <svg width="72" height="72" viewBox="0 0 24 24" fill="#1f4080"><path d="M15.5 14h-.79l-.28-.27C15.410 12.590 16 11.110 16 9.500 16 5.910 13.090 3 9.500 3S3 5.910 3 9.500 5.910 16 9.500 16c1.610 0 3.090-.59 4.230-1.570l.27.28v.79l5 4.990L20.490 19l-4.990-5zm-6 0C7.010 14 5 11.990 5 9.500S7.010 5 9.500 5 14 7.010 14 9.500 11.990 14 9.500 14z" /></svg>
        <span>Search Destination</span>
      </div>
      <div className="mt-[68px]">
        <PlaceRow icon="M12 5.69l5 4.500V18h-2v-6H9v6H7v-7.810l5-4.500M12 3L2 12h3v8h6v-6h2v6h6v-8h3L12 3z" title="Add Home" titleClass="tracking-[0.39px]" subtitle="Your residential address" subtitleClass="tracking-[0.18px]" />
        <hr className="mb-[50px] mt-[30px] h-[3px] border-0 bg-[#696969]" />
        <PlaceRow icon="M14 6V4h-4v2h4zM4 8v11h16V8H4zm16-2c1.110 0 2 .89 2 2v11c0 1.110-.89 2-2 2H4c-1.110 0-2-.89-2-2l.01-11c0-1.110.88-2 1.990-2h4V4c0-1.110.89-2 2-2h4c1.110 0 2 .89 2 2v2h4z" title="Add work" titleClass="tracking-[0.06px]" subtitle="Your office address" subtitleClass="tracking-[0.13px]" />
      </div>
    </section>
  );
}

function Dialog() {
  return (
    <div className="absolute inset-x-0 bottom-[144px] top-[84px] flex items-center justify-center">
      <div role="dialog" className="flex h-[711px] w-[840px] flex-col items-center whitespace-nowrap rounded-[12px] bg-white pt-[81px] text-center text-[#212121]">
        <h2 className="text-[64px] font-bold leading-[80px] tracking-[0.24px]">No driver found</h2>
        <p className="mt-[100px] text-[40.500px] leading-[54px] tracking-[0.38px]">
          No available driver close by, we<br />suggest you try again shortly
        </p>
        <button className="mt-[112px] h-[154px] w-[602px] rounded-full border-[3px] border-[#e2e5e8] pt-[3px] text-[43.500px] font-bold tracking-[0.4px] text-[#383836]">CLOSE</button>
      </div>
    </div>
  );
}

function NavBar() {
  return (
    <nav className="relative grid h-[144px] grid-cols-3 place-items-center bg-black px-[135px]">
      {[
        <path key="recents" d="M60 12H12v9M12 36h48M12 60h48v-9" />,
        <g key="home"><circle cx="36" cy="36" r="31.800" strokeWidth="2.500" /><path d="M12.500 36 36 12 59.500 36M54.300 18v14M17.500 45v15h37V45" /></g>,
        <path key="back" d="M60 12 12 36l48 24" />,
      ].map((icon) => (
        <svg key={icon.key} width="72" height="72" viewBox="0 0 72 72" fill="none" stroke="#999" strokeWidth="5.600" strokeLinecap="round" strokeLinejoin="round">{icon}</svg>
      ))}
    </nav>
  );
}

export default function App() {
  return (
    <main className="relative flex h-[2340px] w-[1080px] flex-col overflow-hidden bg-[#757575] font-['Inter',sans-serif] [font-feature-settings:'cv11']">
      <MapCanvas />
      <MapControls />
      <DebugBanner />
      <StatusBar />
      <div className="flex-1" />
      <BottomSheet />
      <NavBar />
      <Dialog />
    </main>
  );
}
